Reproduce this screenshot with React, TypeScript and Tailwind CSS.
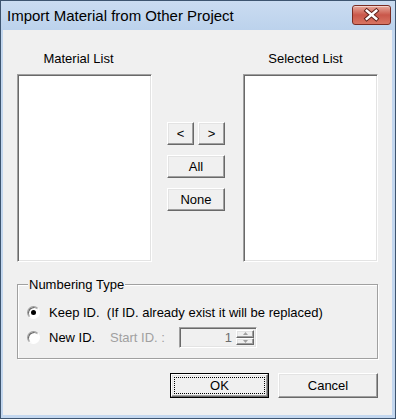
const raised =
  "bg-[#f0f0f0] border border-t-white border-l-white border-r-[#696969] border-b-[#696969] shadow-[inset_-1px_-1px_0_#a0a0a0,inset_1px_1px_0_#e3e3e3]";
const sunken =
  "border border-t-[#a0a0a0] border-l-[#a0a0a0] border-r-white border-b-white shadow-[inset_1px_1px_0_#696969,inset_-1px_-1px_0_#e3e3e3]";

function CloseButton() {
  return (
    <div className="mt-[4px] w-[39px] h-[20px] rounded-[3px] border border-[#7a2c23] bg-gradient-to-b from-[#e6a89c] via-[#c9574a] to-[#d87462] flex items-center justify-center shadow-[inset_0_1px_0_rgba(255,255,255,0.5)]">
      <svg width="39" height="20" viewBox="0 0 39 20">
        <path d="M14.5 5.5 L24.5 14 M24.5 5.5 L14.5 14" stroke="#5c2019" strokeWidth="4.6" strokeLinecap="square" />
        <path d="M14.5 5.5 L24.5 14 M24.5 5.5 L14.5 14" stroke="#ffffff" strokeWidth="2.6" strokeLinecap="square" />
      </svg>
    </div>
  );
}

function Radio({ checked }: { checked?: boolean }) {
  return (
    <span className="ml-[9px] w-[13px] h-[13px] rounded-full bg-white border border-t-[#a0a0a0] border-l-[#a0a0a0] border-r-white border-b-white shadow-[inset_1px_1px_0_#696969] flex items-center justify-center">
      {checked && <span className="w-[5px] h-[5px] rounded-full bg-black" />}
    </span>
  );
}

function SpinArrow({ up }: { up?: boolean }) {
  return (
    <div className={`${raised} flex-1 flex items-center justify-center`}>
      <svg width="5" height="3" viewBox="0 0 5 3">
        <path d={up ? "M2.5 0 L5 3 L0 3 Z" : "M0 0 L5 0 L2.5 3 Z"} fill="#a0a0a0" />
      </svg>
    </div>
  );
}

export default function App() {
  return (
    <div className="w-[396px] h-[419px] flex flex-col bg-[#c3d7ef] border border-[#3e5570] font-['Liberation_Sans',Arial,sans-serif] text-[13px] leading-[15px] text-black">
      {/* title bar */}
      <div className="h-[29px] flex items-start justify-between pl-[6px] pr-[4px] bg-gradient-to-b from-[#cadcf1] to-[#bcd2ec]">
        <span className="mt-[6px] text-[15px] leading-[18px]">Import Material from Other Project</span>
        <CloseButton />
      </div>

      {/* client area */}
      <div className="flex-1 ml-[2px] mr-[3px] mb-[3px] bg-[#f0f0f0] px-[14px] pt-[21px] flex flex-col">
        <div className="flex">
          <div className="w-[135px] flex flex-col">
            <div className="text-center pr-[12px]">Material List</div>
            <div className={`mt-[8px] h-[188px] bg-white ${sunken}`} />
          </div>

          <div className="w-[91px] pl-[15px] pt-[71px] flex flex-col gap-[10px]">
            <div className="flex gap-[4px]">
              <button className={`${raised} w-[27px] h-[23px] flex items-center justify-center`}>&lt;</button>
              <button className={`${raised} w-[27px] h-[23px] flex items-center justify-center`}>&gt;</button>
            </div>
            <button className={`${raised} w-[58px] h-[23px]`}>All</button>
            <button className={`${raised} w-[58px] h-[23px]`}>None</button>
          </div>

          <div className="w-[135px] flex flex-col">
            <div className="text-center pr-[10px]">Selected List</div>
            <div className={`mt-[8px] h-[188px] bg-white ${sunken}`} />
          </div>
        </div>

        <fieldset className="mt-[15px] border border-[#a0a0a0] shadow-[inset_1px_1px_0_#ffffff,1px_1px_0_#ffffff] pt-[10px] pb-[10px] flex flex-col gap-[5px]">
          <legend className="ml-[10px] px-[1px] bg-[#f0f0f0]">Numbering Type</legend>
          <div className="h-[20px] flex items-center">
            <Radio checked />
            <span className="ml-[9px]">Keep ID.&nbsp; (If ID. already exist it will be replaced)</span>
          </div>
          <div className="h-[21px] flex items-center">
            <Radio />
            <span className="ml-[9px] w-[61px]">New ID.</span>
            <span className="w-[69px] text-[#a0a0a0]">Start ID. :</span>
            <div className={`w-[78px] h-[21px] bg-[#f0f0f0] ${sunken} flex items-stretch p-[2px]`}>
              <span className="flex-1 text-right pr-[4px] text-[#6d6d6d] leading-[15px]">1</span>
              <div className="w-[18px] flex flex-col">
                <SpinArrow up />
                <SpinArrow />
              </div>
            </div>
          </div>
        </fieldset>

        <div className="mt-[14px] flex justify-end gap-[9px]">
          <button className="w-[99px] h-[25px] border border-black">
            <div className={`${raised} h-full p-[2px]`}>
              <div className="h-full border border-dotted border-black flex items-center justify-center">OK</div>
            </div>
          </button>
          <button className={`${raised} w-[100px] h-[25px]`}>Cancel</button>
        </div>
      </div>
    </div>
  );
}
